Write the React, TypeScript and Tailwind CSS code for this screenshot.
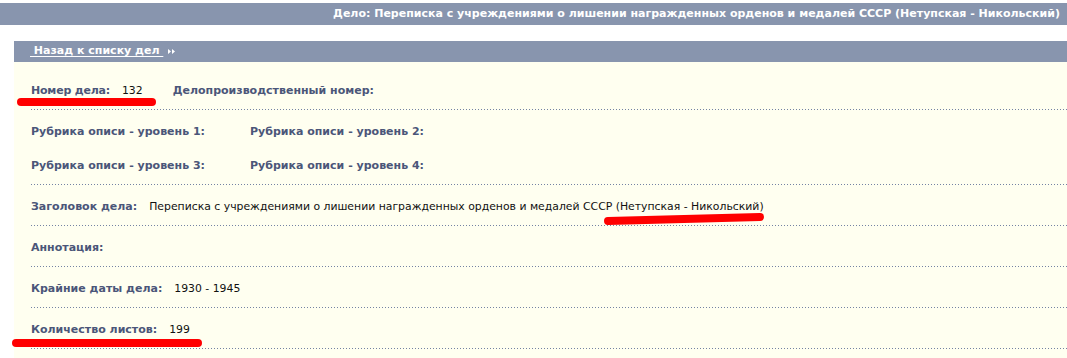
import React from "react";

const LABEL = "font-bold text-[#4b5679]";
const VALUE = "ml-[12px] text-[10.85px] text-[#111]";
const ROW =
  "ml-4 bg-[linear-gradient(to_right,#7483a3_1px,transparent_1px)] bg-[length:3px_1px] bg-repeat-x bg-bottom";

function Row({ children, first }: { children: React.ReactNode; first?: boolean }) {
  return (
    <div className={`${ROW} ${first ? "pt-[22px]" : "pt-[15px]"} pb-[13px] pl-px leading-[13px]`}>
      {children}
    </div>
  );
}

function Stroke({ x, y, w, tilt = 0 }: { x: number; y: number; w: number; tilt?: number }) {
  return (
    <svg
      className="absolute pointer-events-none"
      style={{ left: x - 5, top: y - 10, width: w + 10, height: 20 }}
      viewBox={`0 0 ${w + 10} 20`}
    >
      <line
        x1={5}
        y1={10 + tilt / 2}
        x2={w + 5}
        y2={10 - tilt / 2}
        stroke="#ff0000"
        strokeWidth={8}
        strokeLinecap="round"
      />
    </svg>
  );
}

export default function App() {
  return (
    <div className="relative w-[1067px] h-[358px] overflow-hidden bg-white font-['DejaVu_Sans',Verdana,sans-serif] text-[11px]">
      {/* Title bar */}
      <div className="mt-[3px] h-[22px] bg-[#8895ae] flex items-center justify-end pr-[7px]">
        <span className="font-bold text-white">
          Дело: Переписка с учреждениями о лишении награжденных орденов и медалей СССР (Нетупская - Никольский)
        </span>
      </div>

      <div className="ml-[14px] mt-[16px]">
        {/* Back link bar */}
        <div className="h-[21px] bg-[#8895ae] flex items-center pl-4">
          <a href="#" className="font-bold text-white underline underline-offset-2 whitespace-pre">
            {" Назад к списку дел "}
          </a>
          <svg className="ml-[5px]" width="7" height="5" viewBox="0 0 7 5">
            <path d="M0 0 L3 2.5 L0 5 Z M4 0 L7 2.5 L4 5 Z" fill="#fff" />
          </svg>
        </div>

        {/* Card content */}
        <div className="bg-[#fffff0] pb-4">
          <Row first>
            <span className={`${LABEL} tracking-[-0.2px]`}>Номер дела:</span>
            <span className={VALUE}>132</span>
            <span className={`${LABEL} ml-[30px]`}>Делопроизводственный номер:</span>
          </Row>
          <Row>
            <div className="flex">
              <span className={`${LABEL} w-[219px]`}>Рубрика описи - уровень 1:</span>
              <span className={LABEL}>Рубрика описи - уровень 2:</span>
            </div>
            <div className="flex mt-[21px]">
              <span className={`${LABEL} w-[219px]`}>Рубрика описи - уровень 3:</span>
              <span className={LABEL}>Рубрика описи - уровень 4:</span>
            </div>
          </Row>
          <Row>
            <span className={LABEL}>Заголовок дела:</span>
            <span className={VALUE}>
              Переписка с учреждениями о лишении награжденных орденов и медалей СССР (Нетупская - Никольский)
            </span>
          </Row>
          <Row>
            <span className={LABEL}>Аннотация:</span>
          </Row>
          <Row>
            <span className={LABEL}>Крайние даты дела:</span>
            <span className={VALUE}>1930 - 1945</span>
          </Row>
          <Row>
            <span className={LABEL}>Количество листов:</span>
            <span className={VALUE}>199</span>
          </Row>
        </div>
      </div>

      <Stroke x={21} y={102} w={131} />
      <Stroke x={608} y={219} w={152} tilt={4} />
      <Stroke x={16} y={343} w={182} />
    </div>
  );
}
